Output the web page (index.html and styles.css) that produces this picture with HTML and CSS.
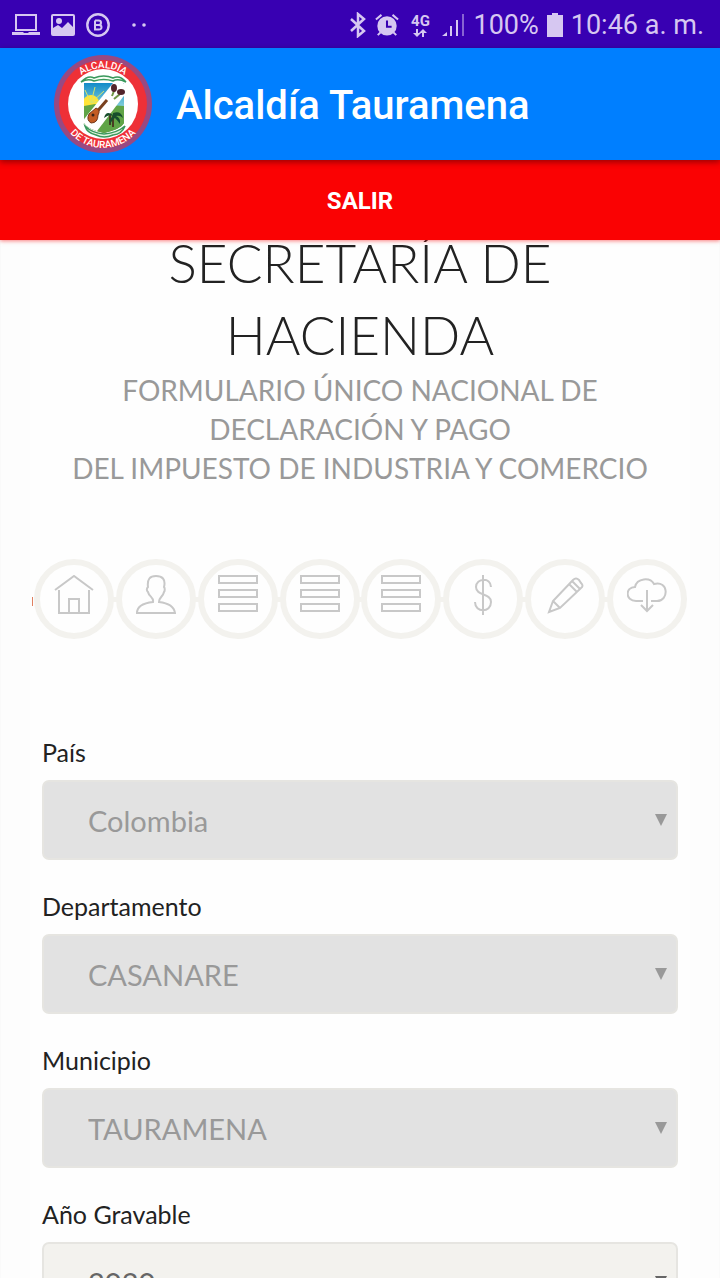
FILE: index.html
```html
<!DOCTYPE html>
<html lang="es">
<head>
<meta charset="utf-8">
<meta name="viewport" content="width=device-width, initial-scale=1">
<title>Alcaldía Tauramena</title>
<link rel="stylesheet" href="styles.css">
</head>
<body>
<div class="status">
  <div class="status-left">
    <svg width="28" height="22" viewBox="0 0 28 22"><rect x="4" y="1" width="20" height="15" fill="none" stroke="currentColor" stroke-width="2"/><path d="M0 18h11l1 1h4l1-1h11v3H0z" fill="currentColor"/></svg>
    <svg width="24" height="22" viewBox="0 0 24 22"><rect x="1" y="1" width="22" height="20" rx="1" fill="none" stroke="currentColor" stroke-width="2"/><circle cx="8" cy="7" r="3" fill="currentColor"/><path d="M2 20v-6l5-3 4 3 6-6 5 5v7z" fill="currentColor"/></svg>
    <svg width="24" height="24" viewBox="0 0 24 24"><circle cx="12" cy="12" r="10.7" fill="none" stroke="currentColor" stroke-width="2.400"/><path d="M9 7.500h3.500q2.500 0 2.500 2.200t-2.500 2.200H9M12.500 12q3 0 3 2.300t-3 2.200H9V7.500" fill="none" stroke="currentColor" stroke-width="2"/></svg>
    <svg class="dots" width="16" height="4" viewBox="0 0 16 4"><circle cx="3" cy="2" r="1.800" fill="currentColor"/><circle cx="13" cy="2" r="1.800" fill="currentColor"/></svg>
  </div>
  <div class="status-right">
    <svg width="18" height="26" viewBox="0 0 18 26"><path d="M2 7l13 12-6 5V2l6 5L2 19" fill="none" stroke="currentColor" stroke-width="2.500"/></svg>
    <svg width="24" height="24" viewBox="0 0 26 26"><path d="M1 7l6-5M25 7l-6-5M6 21l-3 3M20 21l3 3" stroke="currentColor" stroke-width="2.200"/><circle cx="13" cy="14" r="10.500" fill="currentColor"/><path d="M13 8v7h5" fill="none" stroke="#3800b2" stroke-width="2.200"/></svg>
    <div class="net"><span>4G</span><svg width="14" height="8" viewBox="0 0 14 8"><path d="M3 0h2v4h3L4 8 0 4h3zM9 8h2V4h3l-4-4-4 4h3z" fill="currentColor"/></svg></div>
    <svg width="24" height="24" viewBox="0 0 24 24"><path d="M1 23h5v-4zM9 13h2v10H9zM15 7h2v16h-2z" fill="currentColor"/><path d="M21 1h2v22h-2z" fill="currentColor" opacity=".5"/></svg>
    <span class="percent">100%</span>
    <svg width="16" height="24" viewBox="0 0 16 24"><path d="M5 0h6v2h5v22H0V2h5z" fill="currentColor"/></svg>
    <span class="clock">10:46 a. m.</span>
  </div>
</div>

<header class="appbar">
  <svg class="logo" width="100" height="100" viewBox="0 0 100 100" role="img" aria-label="Alcaldía de Tauramena">
    <defs>
      <linearGradient id="sky" x1="0" y1="0" x2="0" y2="1"><stop offset="0" stop-color="#138bc9"/><stop offset=".5" stop-color="#8bd4dc"/><stop offset=".55" stop-color="#85b847"/><stop offset="1" stop-color="#31853c"/></linearGradient>
      <clipPath id="shield"><path d="M31 29h40v40q-3 6-20 10-17-4-20-10z"/></clipPath>
      <path id="arc-top" d="M14 50a36 36 0 0 1 72 0"/>
      <path id="arc-bottom" d="M6 50a44 44 0 0 0 88 0"/>
    </defs>
    <circle cx="50" cy="50" r="49" fill="#984982"/>
    <circle cx="50" cy="50" r="44" fill="#ee3037"/>
    <circle cx="50" cy="50" r="35" fill="#fff"/>
    <g clip-path="url(#shield)">
      <path d="M31 29h40v51H31z" fill="url(#sky)"/>
      <circle cx="38" cy="49" r="8" fill="#ffe438"/>
      <path d="M38 49L32 36M38 49l4-16M38 49l13-12M38 49l17-4" stroke="#d8e66a"/>
      <path d="M31 52l11-2 29 2v28H31z" fill="#60a447"/>
      <path d="M57 71V59" stroke="#493c22" stroke-width="2"/>
      <path d="M28 69L64 24l13 10-36 47z" fill="#fff"/>
      <path d="M60 73V62" stroke="#493c22" stroke-width="2"/>
      <path d="M60 61q-7-5-9 3 5-4 9-2-5 4-3 8 3-5 5-6 3 3 5 6 1-6-4-8 4-1 7 2-2-8-10-5" fill="#174e2d"/>
    </g>
    <path d="M54 46L41 61" stroke="#79411f" stroke-width="3"/>
    <path d="M43 54q5 2 2 7 0 8-7 8-5-3-2-9z" fill="#c35b23" stroke="#74371b"/>
    <circle cx="40" cy="61" r="1.500" fill="#3b2117"/>
    <path d="M59 42l2-5M61 45l6-5" stroke="#6f9545" stroke-width="2"/>
    <ellipse cx="61" cy="34" rx="3" ry="4" fill="#52242b"/><ellipse cx="68" cy="38" rx="4" ry="3" fill="#52242b"/>
    <path d="M28 28q7-7 13-4 10-4 19 0 7-3 13 4-8-4-13-1-9-3-19 0-6-3-13 1z" fill="#f5fff4" stroke="#3a985c" stroke-width="1.500"/>
    <path d="M32 72q7 7 19 8 13-1 21-8-3 8-12 9-9 4-17 0-9-2-11-9z" fill="#dff2dc" stroke="#3a985c" stroke-width="1.500"/>
    <text class="logo-text"><textPath href="#arc-top" startOffset="50%" text-anchor="middle">ALCALDÍA</textPath></text>
    <text class="logo-text"><textPath href="#arc-bottom" startOffset="50%" text-anchor="middle">DE TAURAMENA</textPath></text>
  </svg>
  <span class="app-title">Alcaldía Tauramena</span>
</header>
<button class="exit" type="button">SALIR</button>

<main class="view">
  <div class="sheet">
    <h1>SECRETARÍA DE HACIENDA</h1>
    <p class="subtitle">FORMULARIO ÚNICO NACIONAL DE DECLARACIÓN Y PAGO<br>DEL IMPUESTO DE INDUSTRIA Y COMERCIO</p>
    <nav class="steps" aria-label="Pasos">
      <a href="#inicio" aria-label="Inicio"><svg viewBox="0 0 40 40"><path d="M1 15L20 1l19 14M5 15v23h30V15M15 38V24h10v14"/></svg></a>
      <a href="#contribuyente" aria-label="Contribuyente"><svg viewBox="0 0 40 40"><path d="M17 27c1-5-4-5-5-10-2-2-1-4 0-5-1-8 2-11 8-11s10 3 8 11c1 1 1 4 0 5-1 5-5 5-5 10 9 1 15 4 16 11H1c0-7 7-10 16-11z"/></svg></a>
      <a href="#base" aria-label="Base gravable"><svg viewBox="0 0 40 40"><path d="M1 1h38v7H1zM1 15h38v7H1zM1 29h38v7H1z"/></svg></a>
      <a href="#actividades" aria-label="Actividades"><svg viewBox="0 0 40 40"><path d="M1 1h38v7H1zM1 15h38v7H1zM1 29h38v7H1z"/></svg></a>
      <a href="#liquidacion" aria-label="Liquidación"><svg viewBox="0 0 40 40"><path d="M1 1h38v7H1zM1 15h38v7H1zM1 29h38v7H1z"/></svg></a>
      <a href="#pago" aria-label="Pago"><svg viewBox="0 0 40 40"><path d="M20 0v40M28 12C28 2 13 3 13 12c0 9 15 6 15 15 0 11-16 11-16 0"/></svg></a>
      <a href="#firma" aria-label="Firma"><svg viewBox="0 0 40 40"><path d="M4 37l4-11L28 5q3-3 6 0l2 3q3 3 0 5L15 33zM8 26l7 7M24 9l8 8M27 6l8 8"/></svg></a>
      <a href="#descarga" aria-label="Descarga"><svg viewBox="0 0 40 40"><path d="M16 26H9C-2 26-2 12 8 12 10 3 23 2 27 9c15-4 15 17 3 17h-6M20 15v21M14 30l6 6 6-6"/></svg></a>
    </nav>
    <form class="fields">
      <div class="field">
        <label for="pais">País</label>
        <div class="pick"><select id="pais" disabled><option>Colombia</option></select><svg class="arrow" width="12" height="12" viewBox="0 0 12 12"><path d="M0 0h12L6 12z"/></svg></div>
      </div>
      <div class="field">
        <label for="departamento">Departamento</label>
        <div class="pick"><select id="departamento" disabled><option>CASANARE</option></select><svg class="arrow" width="12" height="12" viewBox="0 0 12 12"><path d="M0 0h12L6 12z"/></svg></div>
      </div>
      <div class="field">
        <label for="municipio">Municipio</label>
        <div class="pick"><select id="municipio" disabled><option>TAURAMENA</option></select><svg class="arrow" width="12" height="12" viewBox="0 0 12 12"><path d="M0 0h12L6 12z"/></svg></div>
      </div>
      <div class="field">
        <label for="anio">Año Gravable</label>
        <div class="pick"><select id="anio"><option>2020</option></select><svg class="arrow" width="12" height="12" viewBox="0 0 12 12"><path d="M0 0h12L6 12z"/></svg></div>
      </div>
    </form>
  </div>
</main>
</body>
</html>
```
FILE: styles.css
```css
* { box-sizing: border-box; }
body {
  margin: 0;
  height: 100vh;
  display: flex;
  flex-direction: column;
  overflow: hidden;
  background: #fff;
  padding-bottom: 2px;
  font-family: Lato, "Open Sans", sans-serif;
}
svg { display: block; flex: none; }

.status {
  flex: none;
  height: 48px;
  padding: 2px 16px 0 12px;
  display: flex;
  align-items: center;
  justify-content: space-between;
  background: #3800b2;
  color: #d6c7f1;
  font-family: Roboto, sans-serif;
  font-size: 27px;
}
.status-left, .status-right { display: flex; align-items: center; }
.status-left { gap: 11px; }
.status-right { gap: 8px; white-space: nowrap; }
.dots { margin-left: 10px; }
.net {
  width: 26px;
  display: flex;
  flex-direction: column;
  align-items: center;
  font-size: 15px;
  font-weight: 700;
  line-height: 16px;
}

.appbar {
  flex: none;
  height: 112px;
  padding: 0 53px;
  display: flex;
  align-items: center;
  gap: 23px;
  background: #007fff;
  z-index: 2;
  box-shadow: 0 2px 6px rgba(0, 0, 0, .4);
}
.logo-text { fill: #fff; font: 500 10px Roboto, sans-serif; }
.app-title {
  padding-top: 3px;
  color: #fff;
  font: 500 40px Roboto, sans-serif;
  white-space: nowrap;
}
.exit {
  flex: none;
  height: 80px;
  padding: 2px 0 0;
  border: 0;
  background: #fa0203;
  color: #fff;
  font: 700 24px Roboto, sans-serif;
  z-index: 1;
  box-shadow: 0 1px 4px rgba(250, 2, 3, .5);
}

.view {
  flex: 1;
  min-height: 0;
  overflow: hidden;
  padding: 0 30px;
  border: solid #fafafa;
  border-width: 0 1px;
  background: #fdfdfd;
}
.sheet {
  margin: -13px -1px 0;
  padding: 0 2px;
  background: #fefefe;
}
h1 {
  margin: 0 auto;
  max-width: 480px;
  color: #222;
  font-size: 53px;
  font-weight: 300;
  line-height: 72px;
  text-align: center;
}
.subtitle {
  margin: 0 auto;
  padding: 0 10px;
  color: #999;
  font-size: 28px;
  line-height: 39px;
  text-align: center;
}

.steps {
  margin-top: 71px;
  display: flex;
  justify-content: space-between;
  padding: 0 1px;
  border-left: 1px solid transparent;
  border-image: linear-gradient(transparent 48%, #e08060 48%, #e08060 58%, transparent 58%) 1;
  background: linear-gradient(#f3f2ee, #f3f2ee) center / calc(100% - 80px) 5px no-repeat;
}
.steps a {
  width: 80px;
  height: 80px;
  padding: 10px 14px;
  border: 6px solid #f3f2ee;
  border-radius: 50%;
  background: #fefefe;
}
.steps svg {
  width: 40px;
  height: 40px;
  fill: none;
  stroke: #c8c8c8;
  stroke-width: 2;
}

.fields {
  margin-top: 97px;
  padding: 0 10px;
  display: flex;
  flex-direction: column;
  gap: 30px;
}
.field { display: flex; flex-direction: column; gap: 12px; }
label {
  color: #222;
  font-size: 25px;
  line-height: 32px;
}
.pick { position: relative; }
select {
  display: block;
  appearance: none;
  width: 100%;
  height: 80px;
  padding: 0 44px;
  border: 2px solid #e6e5e1;
  border-radius: 7px;
  background: #f3f2ee;
  color: #666;
  font: 29px Lato, "Open Sans", sans-serif;
  opacity: 1;
}
select:disabled { background: #e2e2e2; color: #999; opacity: 1; }
.arrow {
  position: absolute;
  right: 11px;
  top: 34px;
  fill: #666;
  pointer-events: none;
}
select:disabled + .arrow { fill: #999; }
```
